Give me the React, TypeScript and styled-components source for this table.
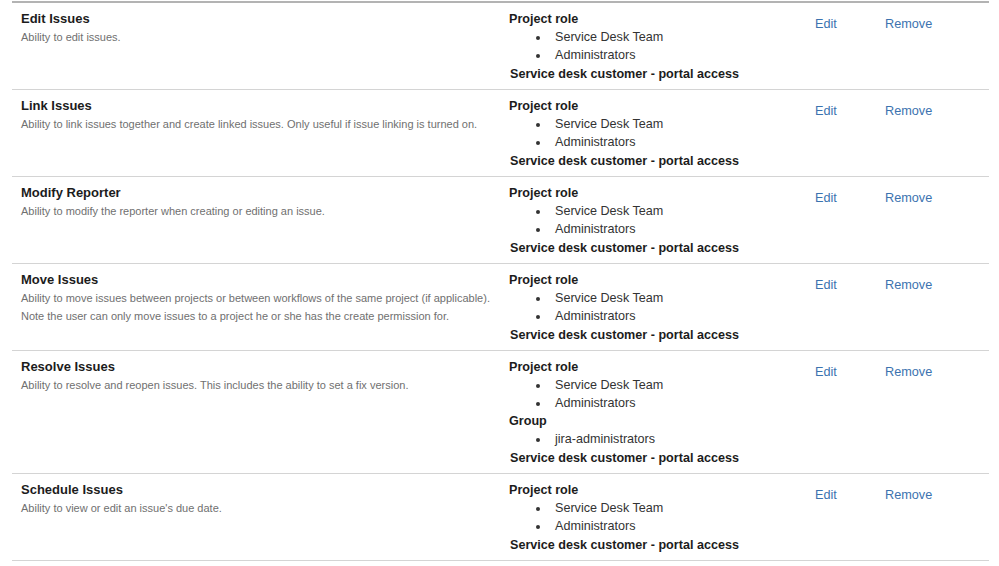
import React from "react";
import styled, { createGlobalStyle } from "styled-components";

const Global = createGlobalStyle`
  html, body { margin: 0; padding: 0; background: #ffffff; }
  body { font-family: "Liberation Sans", Arial, sans-serif; color: #333333; }
`;

const Table = styled.div`
  margin: 1px 0 0 12px;
  width: 977px;
  border-top: 2px solid #b3b3b3;
`;

const Row = styled.div`
  display: grid;
  grid-template-columns: 497px 306px 70px 1fr;
  padding: 7px 0 6px;
  border-bottom: 1px solid #d4d4d4;
`;

const PermCell = styled.div`
  padding-left: 9px;
`;

const Title = styled.div`
  font-size: 13px;
  font-weight: bold;
  line-height: 18px;
  color: #1c1c1c;
`;

const Desc = styled.div`
  font-size: 11px;
  line-height: 18px;
  color: #707070;
`;

const RolesCell = styled.div`
  font-size: 12.6px;
  line-height: 18px;
  color: #333333;
`;

const RoleHeading = styled.div<{ $portal?: boolean }>`
  font-weight: bold;
  color: #1c1c1c;
  margin-top: ${(p) => (p.$portal ? "1px" : "0")};
  padding-left: ${(p) => (p.$portal ? "1px" : "0")};
`;

const RoleList = styled.ul`
  list-style: none;
  margin: 0;
  padding: 0 0 0 46px;
`;

const RoleItem = styled.li`
  position: relative;
  &::before {
    content: "";
    position: absolute;
    left: -19px;
    top: 8px;
    width: 4px;
    height: 4px;
    border-radius: 50%;
    background: #333333;
  }
`;

const LinkCell = styled.div`
  padding-top: 5px;
  font-size: 12.7px;
  line-height: 18px;
`;

const Link = styled.a`
  color: #3b73af;
  text-decoration: none;
  cursor: pointer;
`;

type Group = { heading: string; items: string[] };
type Perm = { title: string; desc: string[]; groups: Group[] };

const std: Group[] = [
  { heading: "Project role", items: ["Service Desk Team", "Administrators"] },
];
const portal = "Service desk customer - portal access";

const perms: Perm[] = [
  { title: "Edit Issues", desc: ["Ability to edit issues."], groups: std },
  {
    title: "Link Issues",
    desc: [
      "Ability to link issues together and create linked issues. Only useful if issue linking is turned on.",
    ],
    groups: std,
  },
  {
    title: "Modify Reporter",
    desc: ["Ability to modify the reporter when creating or editing an issue."],
    groups: std,
  },
  {
    title: "Move Issues",
    desc: [
      "Ability to move issues between projects or between workflows of the same project (if applicable).",
      "Note the user can only move issues to a project he or she has the create permission for.",
    ],
    groups: std,
  },
  {
    title: "Resolve Issues",
    desc: [
      "Ability to resolve and reopen issues. This includes the ability to set a fix version.",
    ],
    groups: [...std, { heading: "Group", items: ["jira-administrators"] }],
  },
  {
    title: "Schedule Issues",
    desc: ["Ability to view or edit an issue's due date."],
    groups: std,
  },
];

export default function App() {
  return (
    <>
      <Global />
      <Table>
        {perms.map((p) => (
          <Row key={p.title}>
            <PermCell>
              <Title>{p.title}</Title>
              {p.desc.map((d) => (
                <Desc key={d}>{d}</Desc>
              ))}
            </PermCell>
            <RolesCell>
              {p.groups.map((g) => (
                <React.Fragment key={g.heading}>
                  <RoleHeading>{g.heading}</RoleHeading>
                  <RoleList>
                    {g.items.map((i) => (
                      <RoleItem key={i}>{i}</RoleItem>
                    ))}
                  </RoleList>
                </React.Fragment>
              ))}
              <RoleHeading $portal>{portal}</RoleHeading>
            </RolesCell>
            <LinkCell>
              <Link>Edit</Link>
            </LinkCell>
            <LinkCell>
              <Link>Remove</Link>
            </LinkCell>
          </Row>
        ))}
      </Table>
    </>
  );
}
